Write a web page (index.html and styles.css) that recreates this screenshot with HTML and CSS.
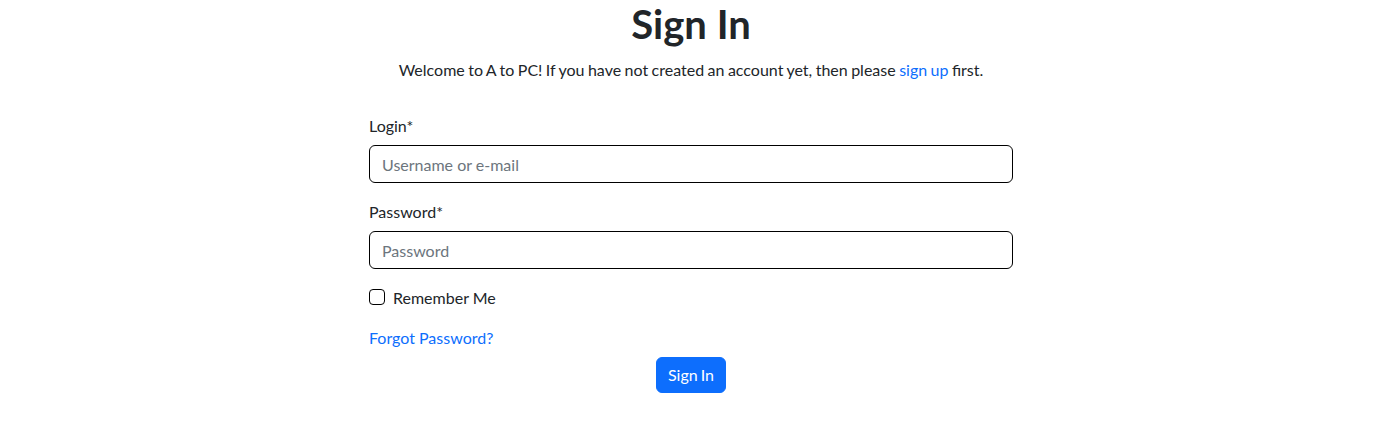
FILE: index.html
```html
<!DOCTYPE html>
<html lang="en">
<head>
<meta charset="utf-8">
<title>Sign In</title>
<link rel="stylesheet" href="styles.css">
</head>
<body>
<main class="page">
  <h1 class="title">Sign In</h1>
  <p class="intro">Welcome to A to PC! If you have not created an account yet, then please <a class="link" href="#">sign up</a> first.</p>
  <form class="form">
    <div class="field">
      <label class="label" for="login">Login*</label>
      <input class="input" id="login" type="text" placeholder="Username or e-mail">
    </div>
    <div class="field">
      <label class="label" for="password">Password*</label>
      <input class="input" id="password" type="password" placeholder="Password">
    </div>
    <div class="check-row">
      <input class="check" id="remember" type="checkbox">
      <label class="check-label" for="remember">Remember Me</label>
    </div>
    <div class="forgot-row">
      <a class="link" href="#">Forgot Password?</a>
    </div>
    <div class="actions">
      <button class="btn" type="button">Sign In</button>
    </div>
  </form>
</main>
</body>
</html>
```

FILE: styles.css
```css
* { box-sizing: border-box; }
html, body { margin: 0; padding: 0; background: #fff; }
body {
  font-family: Lato, "Liberation Sans", sans-serif;
  font-size: 16px;
  line-height: 1.5;
  color: #212529;
}
.page {
  display: flex;
  flex-direction: column;
  align-items: center;
}
.title {
  margin: 0 0 8px;
  font-size: 40px;
  font-weight: 700;
  line-height: 1.2;
  text-align: center;
}
.intro {
  margin: 2px 0 0;
  text-align: center;
  word-spacing: -0.65px;
}
.link {
  color: #0d6efd;
  text-decoration: none;
}
.form {
  width: 644px;
  margin-top: 31px;
  display: flex;
  flex-direction: column;
}
.field {
  display: flex;
  flex-direction: column;
  margin-bottom: 16px;
}
.label {
  padding-top: 1px;
  margin-bottom: 7px;
}
.input {
  font: inherit;
  color: #212529;
  height: 38px;
  padding: 6px 12px;
  border: 1px solid #000;
  border-radius: 6px;
  background: #fff;
  outline: none;
}
.input::placeholder { color: #6c757d; opacity: 1; }
.check-row {
  display: flex;
  align-items: center;
  gap: 8px;
  height: 24px;
  margin-bottom: 17px;
}
.check {
  appearance: none;
  -webkit-appearance: none;
  width: 16px;
  height: 16px;
  margin: 0;
  border: 1px solid #000;
  border-radius: 4px;
  background: #fff;
}
.check-label {
  margin-top: 2px;
}
.forgot-row {
  height: 24px;
  margin-bottom: 7px;
}
.actions {
  display: flex;
  justify-content: center;
}
.btn {
  font: inherit;
  color: #fff;
  background: #0d6efd;
  border: 1px solid #0d6efd;
  border-radius: 6px;
  padding: 5px 11px;
  line-height: 24px;
  word-spacing: -1px;
  cursor: pointer;
}
```
